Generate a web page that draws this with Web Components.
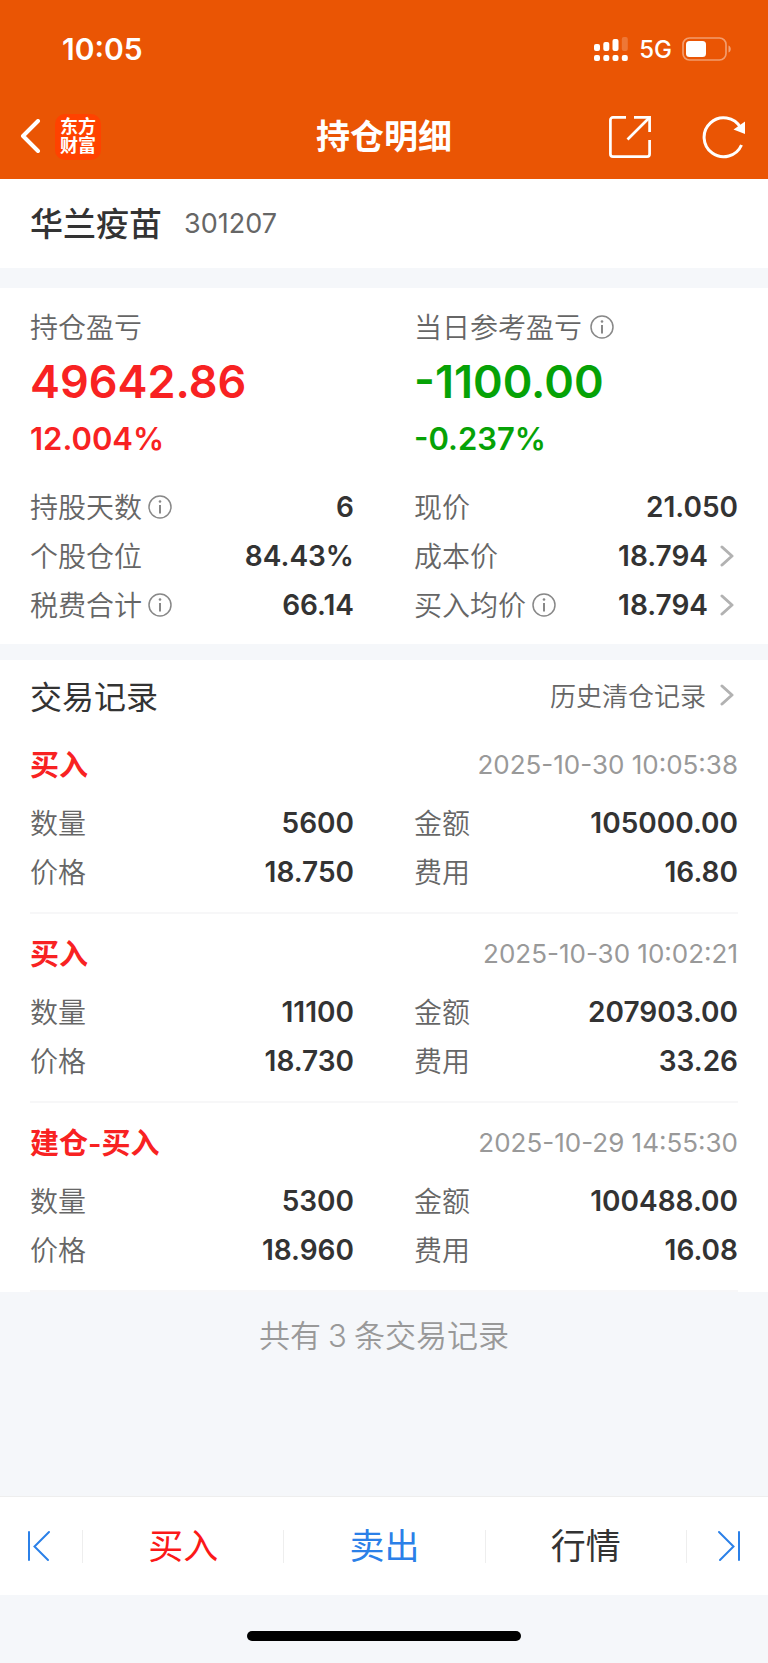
<!DOCTYPE html>
<html lang="zh-CN">
<head>
<meta charset="utf-8">
<meta name="viewport" content="width=device-width, initial-scale=1">
<title>持仓明细</title>
<style>
	body {
		margin: 0;
		background: #f5f7fa;
		color: #333;
		font-family: Inter, "Noto Sans CJK SC", sans-serif;
		font-size: 28px;
	}
</style>
</head>
<body>
<position-page>
	<status-bar slot="top" time="10:05" network="5G"></status-bar>
	<nav-bar slot="top">持仓明细</nav-bar>

	<stock-title code="301207">华兰疫苗</stock-title>

	<page-card>
		<two-columns>
			<profit-figure label="持仓盈亏" amount="49642.86" percent="12.004%"></profit-figure>
			<profit-figure label="当日参考盈亏" amount="-1100.00" percent="-0.237%" info down></profit-figure>
		</two-columns>
		<two-columns>
			<data-row label="持股天数" value="6" info></data-row>
			<data-row label="现价" value="21.050"></data-row>
			<data-row label="个股仓位" value="84.43%"></data-row>
			<data-row label="成本价" value="18.794" link></data-row>
			<data-row label="税费合计" value="66.14" info></data-row>
			<data-row label="买入均价" value="18.794" info link></data-row>
		</two-columns>
	</page-card>

	<record-list heading="交易记录" more="历史清仓记录">
		<trade-record type="买入" time="2025-10-30 10:05:38" count="5600" total="105000.00" price="18.750" fee="16.80"></trade-record>
		<trade-record type="买入" time="2025-10-30 10:02:21" count="11100" total="207903.00" price="18.730" fee="33.26"></trade-record>
		<trade-record type="建仓-买入" time="2025-10-29 14:55:30" count="5300" total="100488.00" price="18.960" fee="16.08"></trade-record>
	</record-list>
	<record-total count="3"></record-total>

	<action-bar slot="bottom"></action-bar>
</position-page>

<script>
const infoIcon = `
	<button class="info" aria-label="说明">
		<svg width="24" height="24" viewBox="0 0 24 24" fill="none" stroke="#888" stroke-width="1.5">
			<circle cx="12" cy="12" r="11"/>
			<path d="M12 10v8.500" stroke-width="2"/>
			<circle cx="12" cy="6.500" r="1.300" fill="#888" stroke="none"/>
		</svg>
	</button>
`

const arrowIcon = `
	<svg class="arrow" width="14" height="24" viewBox="0 0 14 24" fill="none" stroke="#b2b2b2" stroke-width="3" stroke-linecap="round" stroke-linejoin="round">
		<path d="M2 3L12 12L2 21"/>
	</svg>
`

const resetCss = `
	button {
		margin: 0;
		padding: 0;
		border: 0;
		background: none;
		color: inherit;
		font: inherit;
		cursor: pointer;
	}

	a {
		color: inherit;
		text-decoration: none;
	}

	svg {
		display: block;
	}
`

// Defines an element whose shadow root is rendered once from its attributes
const define = (name, render) => {
  customElements.define(
    name,
    class extends HTMLElement {
      connectedCallback() {
        const shadowRoot = this.attachShadow({mode: "open"});
        shadowRoot.innerHTML = `<style>${resetCss}</style>` + render(this)
      }
    },
  );
}

define("position-page", () => `
	<style>
		:host {
			display: flex;
			flex-direction: column;
			min-height: 100vh;
		}

		header {
			background: #ea5504;
			color: white;
		}

		main {
			flex: 1;
		}
	</style>
	<header><slot name="top"></slot></header>
	<main><slot></slot></main>
	<slot name="bottom"></slot>
`)

define("status-bar", (el) => `
	<style>
		:host {
			display: flex;
			align-items: center;
			justify-content: space-between;
			height: 98px;
			padding: 0 36px 0 62px;
		}

		.time {
			font-size: 30px;
			font-weight: 600;
		}

		.right {
			display: flex;
			align-items: center;
			gap: 10px;
			font-size: 24px;
			font-weight: 500;
		}
	</style>
	<span class="time">${el.getAttribute("time")}</span>
	<div class="right">
		<svg width="35" height="26" viewBox="0 0 35 26" fill="white">
			<rect x="0" y="8" width="6" height="7" rx="2"/>
			<rect x="9.300" y="6" width="6" height="9" rx="2"/>
			<rect x="18.500" y="3" width="6" height="12" rx="2"/>
			<rect x="27.800" y="1" width="6" height="14" rx="2" opacity=".2"/>
			<rect x="0" y="19" width="6" height="6" rx="2"/>
			<rect x="9.300" y="19" width="6" height="6" rx="2"/>
			<rect x="18.500" y="19" width="6" height="6" rx="2"/>
			<rect x="27.800" y="19" width="6" height="6" rx="2"/>
		</svg>
		<span>${el.getAttribute("network")}</span>
		<svg width="50" height="26" viewBox="0 0 50 26">
			<rect x="1" y="2" width="43" height="22" rx="6.500" fill="none" stroke="white" stroke-width="1.700" opacity=".42"/>
			<rect x="4" y="5" width="20" height="16" rx="3.500" fill="white"/>
			<path d="M46.500 9.500c3 1 3 6 0 7z" fill="white" opacity=".45"/>
		</svg>
	</div>
`)

define("nav-bar", () => `
	<style>
		:host {
			display: grid;
			grid-template-columns: 1fr auto 1fr;
			align-items: center;
			height: 77px;
			padding: 0 20px 4px;
		}

		.left, .right {
			display: flex;
			align-items: center;
		}

		.left {
			gap: 14px;
		}

		.right {
			justify-content: flex-end;
			gap: 50px;
		}

		.logo {
			width: 46px;
			height: 46px;
			box-sizing: border-box;
			padding-top: 3px;
			border-radius: 10px;
			background: #ff4200;
			font-size: 18px;
			font-weight: 700;
			line-height: 19px;
			text-align: center;
		}

		h1 {
			margin: 0;
			font-size: 34px;
			font-weight: 600;
			line-height: 48px;
		}
	</style>
	<div class="left">
		<button aria-label="返回">
			<svg width="21" height="36" viewBox="0 0 21 36" fill="none" stroke="white" stroke-width="4" stroke-linecap="round" stroke-linejoin="round">
				<path d="M18 2L3 17L18 32"/>
			</svg>
		</button>
		<div class="logo">东方<br>财富</div>
	</div>
	<h1><slot></slot></h1>
	<div class="right">
		<button aria-label="分享">
			<svg width="44" height="44" viewBox="0 0 44 44" fill="none" stroke="white" stroke-width="2.700">
				<path d="M18 2.400H5a2.600 2.600 0 0 0-2.600 2.600V39a2.600 2.600 0 0 0 2.600 2.600H39a2.600 2.600 0 0 0 2.600-2.600V25"/>
				<path d="M26 2.400H41.600V17"/>
				<path d="M41 3L19.500 24.500"/>
			</svg>
		</button>
		<button aria-label="刷新">
			<svg width="46" height="44" viewBox="0 0 46 44" fill="none" stroke="white" stroke-width="3">
				<path d="M39.500 30A19.500 19.500 0 1 1 38.500 12.500"/>
				<path d="M43 6.500V19L31.500 14.500z" fill="white" stroke="none"/>
			</svg>
		</button>
	</div>
`)

define("stock-title", (el) => `
	<style>
		:host {
			display: flex;
			align-items: center;
			gap: 22px;
			height: 49px;
			margin-bottom: 20px;
			padding: 20px 30px;
			background: white;
		}

		h2 {
			margin: 0;
			font-size: 33px;
			font-weight: 500;
			line-height: 48px;
		}

		span {
			color: #666;
			font-size: 27px;
		}
	</style>
	<h2><slot></slot></h2>
	<span>${el.getAttribute("code")}</span>
`)

define("page-card", () => `
	<style>
		:host {
			display: flex;
			flex-direction: column;
			gap: 21px;
			margin-bottom: 16px;
			padding: 19px 30px 15px;
			background: white;
		}
	</style>
	<slot></slot>
`)

define("two-columns", () => `
	<style>
		:host {
			display: grid;
			grid-template-columns: 1fr 1fr;
			column-gap: 60px;
		}
	</style>
	<slot></slot>
`)

define("profit-figure", (el) => `
	<style>
		:host {
			display: flex;
			flex-direction: column;
			gap: 7px;
			color: #f82222;
			font-weight: 600;
		}

		:host([down]) {
			color: #06a206;
		}

		.label {
			display: flex;
			align-items: center;
			gap: 8px;
			height: 40px;
			color: #666;
			font-weight: 350;
		}

		.label span {
			padding-bottom: 2px;
		}

		.amount {
			font-size: 45px;
			line-height: 56px;
		}

		.percent {
			font-size: 31px;
			line-height: 44px;
		}
	</style>
	<div class="label">
		<span>${el.getAttribute("label")}</span>
		${el.hasAttribute("info") ? infoIcon : ""}
	</div>
	<div class="amount">${el.getAttribute("amount")}</div>
	<div class="percent">${el.getAttribute("percent")}</div>
`)

define("data-row", (el) => {
  const value = el.getAttribute("value")
  return `
	<style>
		:host {
			display: flex;
			align-items: center;
			justify-content: space-between;
			height: 49px;
		}

		.label {
			display: flex;
			align-items: center;
			gap: 6px;
			color: #666;
			font-weight: 350;
		}

		.label span {
			padding-bottom: 2px;
		}

		.value {
			font-weight: 600;
		}

		a {
			display: flex;
			align-items: center;
			gap: 12px;
			padding-right: 4px;
		}
	</style>
	<div class="label">
		<span>${el.getAttribute("label")}</span>
		${el.hasAttribute("info") ? infoIcon : ""}
	</div>
	${el.hasAttribute("link")
    ? `<a class="value" href="#">${value}${arrowIcon}</a>`
    : `<span class="value">${value}</span>`}
`
})

define("record-list", (el) => `
	<style>
		:host {
			display: block;
			padding: 0 30px;
			background: white;
		}

		.head {
			display: flex;
			align-items: center;
			justify-content: space-between;
			height: 61px;
			padding-top: 4px;
		}

		h2 {
			margin: 0;
			font-size: 32px;
			font-weight: 400;
		}

		a {
			display: flex;
			align-items: center;
			gap: 14px;
			padding-right: 4px;
			color: #666;
			font-size: 26px;
			font-weight: 350;
		}
	</style>
	<div class="head">
		<h2>${el.getAttribute("heading")}</h2>
		<a href="#">${el.getAttribute("more")}${arrowIcon}</a>
	</div>
	<slot></slot>
`)

define("trade-record", (el) => `
	<style>
		:host {
			display: block;
			padding: 10px 0 16px;
			border-bottom: 2px solid #f7f7f8;
		}

		.head {
			display: flex;
			align-items: center;
			justify-content: space-between;
			height: 58px;
			margin-bottom: 5px;
		}

		h3 {
			margin: 0;
			padding-bottom: 2px;
			color: #f82222;
			font-size: 29px;
			font-weight: 600;
		}

		time {
			color: #999;
			font-size: 26px;
		}
	</style>
	<div class="head">
		<h3>${el.getAttribute("type")}</h3>
		<time>${el.getAttribute("time")}</time>
	</div>
	<two-columns>
		<data-row label="数量" value="${el.getAttribute("count")}"></data-row>
		<data-row label="金额" value="${el.getAttribute("total")}"></data-row>
		<data-row label="价格" value="${el.getAttribute("price")}"></data-row>
		<data-row label="费用" value="${el.getAttribute("fee")}"></data-row>
	</two-columns>
`)

define("record-total", (el) => `
	<style>
		:host {
			display: block;
			padding: 22px 30px;
			color: #999;
			font-size: 31px;
			font-weight: 350;
			line-height: 44px;
			text-align: center;
		}

		span {
			margin: 0 7px;
		}
	</style>
	共有<span>${el.getAttribute("count")}</span>条交易记录
`)

define("action-bar", () => `
	<style>
		:host {
			display: block;
		}

		nav {
			display: grid;
			grid-template-columns: 82px 1fr 1fr 1fr 82px;
			align-items: center;
			height: 98px;
			border-top: 1px solid #eee;
			background: white;
			font-size: 35px;
		}

		button {
			display: flex;
			align-items: center;
			justify-content: center;
			height: 33px;
			padding-bottom: 6px;
		}

		button + button {
			border-left: 1px solid #eee;
		}

		.prev {
			padding: 0 5px 0 0;
		}

		.next {
			padding: 0 0 0 4px;
		}

		.buy {
			color: #fb1818;
		}

		.sell {
			color: #2b80e8;
		}

		.home {
			display: flex;
			align-items: center;
			justify-content: center;
			height: 54px;
			padding-top: 14px;
		}

		.home div {
			width: 274px;
			height: 10px;
			border-radius: 5px;
			background: black;
		}
	</style>
	<nav>
		<button class="prev" aria-label="上一只">
			<svg width="24" height="32" viewBox="0 0 24 32" fill="none" stroke="#2b80e8" stroke-width="2" stroke-linecap="round">
				<path d="M2 2V30M22 2L7.500 16.500L21 30"/>
			</svg>
		</button>
		<button class="buy">买入</button>
		<button class="sell">卖出</button>
		<button>行情</button>
		<button class="next" aria-label="下一只">
			<svg width="24" height="32" viewBox="0 0 24 32" fill="none" stroke="#2b80e8" stroke-width="2" stroke-linecap="round">
				<path d="M22 2V30M2 2L16.500 16.500L3 30"/>
			</svg>
		</button>
	</nav>
	<div class="home"><div></div></div>
`)
</script>
</body>
</html>
